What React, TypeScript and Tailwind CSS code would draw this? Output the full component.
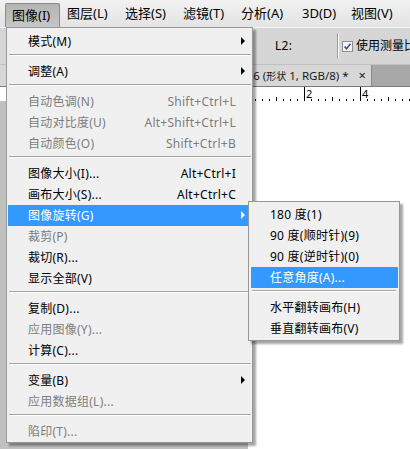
type Item =
  | { sep: true }
  | { label: string; shortcut?: string; disabled?: boolean; arrow?: boolean; active?: boolean; sep?: false };

const mainItems: Item[] = [
  { label: "模式(M)", arrow: true },
  { sep: true },
  { label: "调整(A)", arrow: true },
  { sep: true },
  { label: "自动色调(N)", shortcut: "Shift+Ctrl+L", disabled: true },
  { label: "自动对比度(U)", shortcut: "Alt+Shift+Ctrl+L", disabled: true },
  { label: "自动颜色(O)", shortcut: "Shift+Ctrl+B", disabled: true },
  { sep: true },
  { label: "图像大小(I)...", shortcut: "Alt+Ctrl+I" },
  { label: "画布大小(S)...", shortcut: "Alt+Ctrl+C" },
  { label: "图像旋转(G)", arrow: true, active: true },
  { label: "裁剪(P)", disabled: true },
  { label: "裁切(R)..." },
  { label: "显示全部(V)" },
  { sep: true },
  { label: "复制(D)..." },
  { label: "应用图像(Y)...", disabled: true },
  { label: "计算(C)..." },
  { sep: true },
  { label: "变量(B)", arrow: true },
  { label: "应用数据组(L)...", disabled: true },
  { sep: true },
  { label: "陷印(T)...", disabled: true },
];

const rotateItems: Item[] = [
  { label: "180 度(1)" },
  { label: "90 度(顺时针)(9)" },
  { label: "90 度(逆时针)(0)" },
  { label: "任意角度(A)...", active: true },
  { sep: true },
  { label: "水平翻转画布(H)" },
  { label: "垂直翻转画布(V)" },
];

const menuBar = [
  { label: "图像(I)", w: "w-[55px]", open: true },
  { label: "图层(L)", w: "w-[58px]" },
  { label: "选择(S)", w: "w-[58px]" },
  { label: "滤镜(T)", w: "w-[58px]" },
  { label: "分析(A)", w: "w-[61px]" },
  { label: "3D(D)", w: "w-[49px]" },
  { label: "视图(V)", w: "w-[58px]" },
];

function Separator({ inset }: { inset: string }) {
  return (
    <div className={`h-[9px] pt-[2px] ${inset}`}>
      <div className="h-px bg-[#a5a5a5]" />
      <div className="h-px bg-white" />
    </div>
  );
}

function MenuRow({ item, sub }: { item: Exclude<Item, { sep: true }>; sub?: boolean }) {
  const tone = item.active ? "bg-[#3399ff] text-white" : item.disabled ? "text-[#7d7d7d]" : "text-black";
  return (
    <div
      className={`relative flex h-[21px] items-center ${
        sub ? "ml-[2px] mr-px pl-[19px]" : "ml-px mr-[3px] pl-[20px] pr-[13px]"
      } ${tone}`}
    >
      <span className="flex-1 whitespace-nowrap">{item.label}</span>
      {item.shortcut ? <span className="whitespace-nowrap">{item.shortcut}</span> : null}
      {item.arrow ? (
        <span
          className={`absolute right-[4px] top-[6px] h-0 w-0 border-y-[4px] border-l-[4px] border-y-transparent ${
            item.active ? "border-l-white" : "border-l-black"
          }`}
        />
      ) : null}
    </div>
  );
}

function Ruler() {
  const ticks = [];
  for (let x = 248, i = 0; x < 410; x += 7, i++) {
    const major = i % 8 === 0;
    const half = i % 4 === 0;
    const h = major ? 14 : half ? 4 : 2;
    ticks.push(<line key={x} x1={x + 0.5} x2={x + 0.5} y1={14 - h} y2={14} stroke="#000" strokeWidth="1" />);
  }
  return (
    <svg width="410" height="14" className="block bg-white">
      {ticks}
      <text x="306" y="11" fontSize="11" fontFamily="Noto Sans, sans-serif" fill="#000">
        2
      </text>
      <text x="362" y="11" fontSize="11" fontFamily="Noto Sans, sans-serif" fill="#000">
        4
      </text>
    </svg>
  );
}

export default function App() {
  return (
    <div
      className="relative flex h-[449px] w-[410px] flex-col overflow-hidden bg-white text-[12px] tracking-[0.25px]"
      style={{ fontFamily: '"Noto Sans", "Noto Sans CJK SC", sans-serif' }}
    >
      {/* menu bar */}
      <div className="flex h-[27px] items-center bg-gradient-to-b from-[#f2f2f2] to-[#e3e3e3] pl-[5px] text-[13px] tracking-normal text-black">
        {menuBar.map((m) =>
          m.open ? (
            <div
              key={m.label}
              className={`${m.w} flex h-[24px] shrink-0 items-center self-end rounded-t-[2px] border border-b-0 border-[#8b8b8b] bg-gradient-to-b from-[#b4b4b4] to-[#c6c6c6] pl-[6px]`}
            >
              {m.label}
            </div>
          ) : (
            <div key={m.label} className={`${m.w} shrink-0 whitespace-nowrap pl-[7px]`}>
              {m.label}
            </div>
          )
        )}
      </div>

      {/* options bar */}
      <div className="flex h-[37px] items-center overflow-hidden border-t border-[#f7f7f7] bg-[#d6d6d6] text-black">
        <span className="ml-[275px] w-[62px] shrink-0 text-[12px]">L2:</span>
        <div className="mr-[2px] h-[26px] w-[2px] shrink-0 border-r border-white bg-[#9a9a9a]" />
        <svg width="11" height="11" className="ml-px shrink-0">
          <rect x="0.5" y="0.5" width="10" height="10" fill="#f4f4f4" stroke="#8e8f8f" />
          <path d="M2.5 5.5 L4.5 7.8 L8.5 2.8" fill="none" stroke="#3c4f8c" strokeWidth="1.6" />
        </svg>
        <span className="ml-[3px] shrink-0 whitespace-nowrap text-[12px] tracking-normal">使用测量比例</span>
      </div>

      {/* document tab bar */}
      <div className="flex h-[22px] border-t border-[#c2c2c2] bg-[#a8a8a8]">
        <div className="flex w-[372px] shrink-0 items-center justify-end overflow-hidden border-r border-[#8a8a8a] bg-[#d7d7d7] pr-[5px] text-[11.5px] tracking-normal text-[#1a1a1a]">
          <span className="shrink-0 whitespace-nowrap">
            未标题-1 @ 66 (<span className="text-[10px]">形状</span> 1, RGB/8) *
          </span>
          <span className="ml-[10px] shrink-0 text-[13px]">×</span>
        </div>
      </div>

      {/* ruler */}
      <div className="border-t border-[#7a7a7a]">
        <Ruler />
      </div>

      {/* canvas */}
      <div className="flex flex-1">
        <div className="w-[248px] bg-[#c0c0c0]" />
        <div className="flex-1 bg-white" />
      </div>

      {/* image menu */}
      <div className="absolute left-[6px] top-[27px] w-[247px] border border-[#979797] bg-[#f0f0f0] pt-[3px] shadow-[3px_3px_2px_rgba(0,0,0,0.35)]">
        {mainItems.map((it, i) =>
          it.sep ? <Separator key={i} inset="ml-[2px] mr-px" /> : <MenuRow key={i} item={it} />
        )}
      </div>

      {/* rotate submenu */}
      <div className="absolute left-[248px] top-[201px] w-[152px] border border-[#979797] bg-[#f0f0f0] pb-px pt-[2px] shadow-[3px_3px_2px_rgba(0,0,0,0.35)]">
        {rotateItems.map((it, i) =>
          it.sep ? <Separator key={i} inset="mx-[3px]" /> : <MenuRow key={i} item={it} sub />
        )}
      </div>
    </div>
  );
}
